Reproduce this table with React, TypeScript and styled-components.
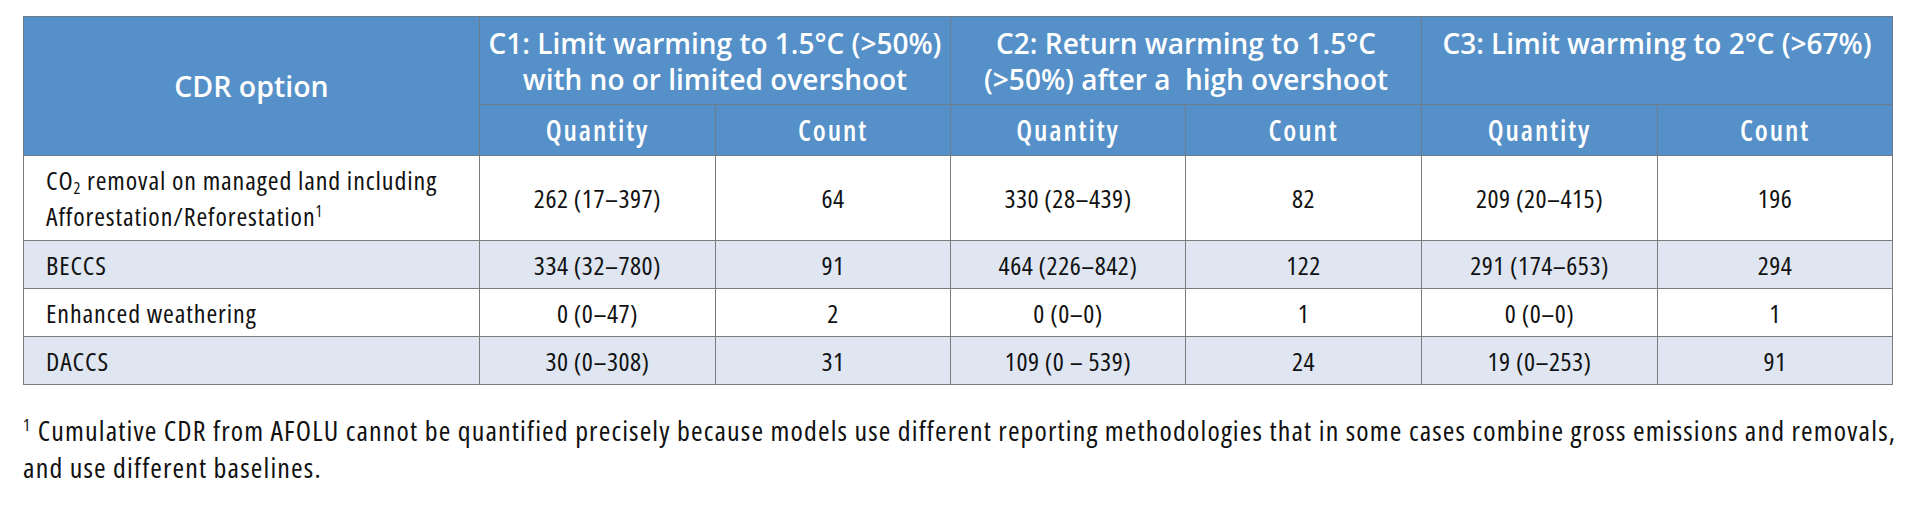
import React from "react";
import styled, { createGlobalStyle, css } from "styled-components";

const GlobalStyle = createGlobalStyle`
  html, body {
    margin: 0;
    padding: 0;
    background: #ffffff;
  }
  body {
    font-family: "Open Sans", "Noto Sans", sans-serif;
    font-stretch: 75%;
    color: #111111;
  }
`;

const Page = styled.div`
  width: 1909px;
  padding: 16px 0 0 23px;
  box-sizing: border-box;
`;

const Table = styled.table`
  width: 1869px;
  table-layout: fixed;
  border-collapse: collapse;
  border: 1px solid #7c7c7c;
`;

const Col = styled.col<{ $w: number }>`
  width: ${(p) => p.$w}px;
`;

type HeadKind = "corner" | "group" | "sub";

const headKinds = {
  corner: css`
    font-size: 28.5px;
    font-stretch: 100%;
    vertical-align: middle;
  `,
  group: css`
    font-size: 28px;
    font-stretch: 100%;
    vertical-align: top;
    padding-top: 8px;
    height: 88px;
  `,
  sub: css`
    font-size: 28px;
    font-stretch: 75%;
    letter-spacing: 1.9px;
    vertical-align: middle;
    height: 51px;
  `,
};

const HeadCell = styled.th<{ $kind: HeadKind }>`
  background: #5590c8;
  color: #ffffff;
  font-weight: 600;
  line-height: 36px;
  text-align: center;
  white-space: nowrap;
  border: 1px solid #6e7d8c;
  padding: 0 2px;
  box-sizing: border-box;
  ${(p) => headKinds[p.$kind]}
`;

const Row = styled.tr<{ $shaded?: boolean }>`
  background: ${(p) => (p.$shaded ? "#dfe6f2" : "#ffffff")};
`;

const OptionCell = styled.td<{ $tall?: boolean }>`
  font-size: 26px;
  letter-spacing: 0.9px;
  line-height: 36px;
  text-align: left;
  white-space: nowrap;
  padding: ${(p) => (p.$tall ? "6px 4px 6px 22px" : "0 4px 0 22px")};
  height: ${(p) => (p.$tall ? "84px" : "48px")};
  border: 1px solid #7c7c7c;
  box-sizing: border-box;
  vertical-align: middle;
`;

const ValueCell = styled.td`
  font-size: 26px;
  letter-spacing: 0.5px;
  text-align: center;
  white-space: nowrap;
  border: 1px solid #7c7c7c;
  vertical-align: middle;
  padding: 0 4px;
`;

const Sub = styled.sub`
  font-size: 0.62em;
  vertical-align: -0.25em;
  line-height: 0;
`;

const Sup = styled.sup`
  font-size: 0.6em;
  vertical-align: 0.6em;
  line-height: 0;
`;

const Footnote = styled.p`
  margin: 27px 0 0;
  font-size: 28px;
  letter-spacing: 1.15px;
  line-height: 37px;
  white-space: nowrap;
  color: #111111;
`;

type DataRow = {
  option: React.ReactNode;
  values: string[];
  tall?: boolean;
};

const rows: DataRow[] = [
  {
    option: (
      <>
        CO<Sub>2</Sub> removal on managed land including
        <br />
        Afforestation/Reforestation<Sup>1</Sup>
      </>
    ),
    values: ["262 (17–397)", "64", "330 (28–439)", "82", "209 (20–415)", "196"],
    tall: true,
  },
  {
    option: "BECCS",
    values: ["334 (32–780)", "91", "464 (226–842)", "122", "291 (174–653)", "294"],
  },
  {
    option: "Enhanced weathering",
    values: ["0 (0–47)", "2", "0 (0–0)", "1", "0 (0–0)", "1"],
  },
  {
    option: "DACCS",
    values: ["30 (0–308)", "31", "109 (0 – 539)", "24", "19 (0–253)", "91"],
  },
];

const categories = [
  <>
    C1: Limit warming to 1.5°C (&gt;50%)
    <br />
    with no or limited overshoot
  </>,
  <>
    C2: Return warming to 1.5°C
    <br />
    (&gt;50%) after a&nbsp; high overshoot
  </>,
  <>C3: Limit warming to 2°C (&gt;67%)</>,
];

const widths = [456, 236, 235, 235, 236, 236, 235];

export default function App() {
  return (
    <Page>
      <GlobalStyle />
      <Table>
        <colgroup>
          {widths.map((w, i) => (
            <Col key={i} $w={w} />
          ))}
        </colgroup>
        <thead>
          <tr>
            <HeadCell rowSpan={2} $kind="corner">
              CDR option
            </HeadCell>
            {categories.map((c, i) => (
              <HeadCell key={i} colSpan={2} $kind="group">
                {c}
              </HeadCell>
            ))}
          </tr>
          <tr>
            {categories.map((_, i) => (
              <React.Fragment key={i}>
                <HeadCell $kind="sub">Quantity</HeadCell>
                <HeadCell $kind="sub">Count</HeadCell>
              </React.Fragment>
            ))}
          </tr>
        </thead>
        <tbody>
          {rows.map((r, i) => (
            <Row key={i} $shaded={i % 2 === 1}>
              <OptionCell $tall={r.tall}>{r.option}</OptionCell>
              {r.values.map((v, j) => (
                <ValueCell key={j}>{v}</ValueCell>
              ))}
            </Row>
          ))}
        </tbody>
      </Table>
      <Footnote>
        <Sup>1</Sup> Cumulative CDR from AFOLU cannot be quantified precisely because models use different
        reporting methodologies that in some cases combine gross emissions and removals,
        <br />
        and use different baselines.
      </Footnote>
    </Page>
  );
}
